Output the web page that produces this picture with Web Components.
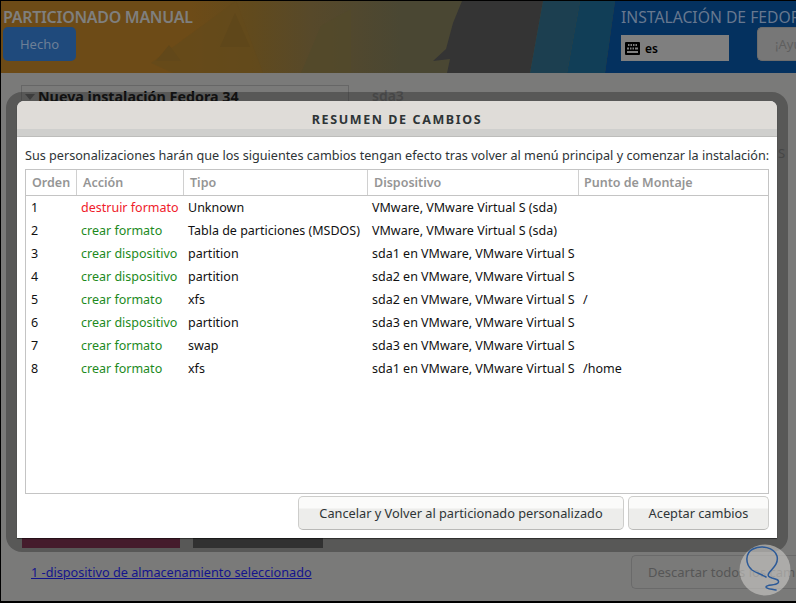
<!DOCTYPE html>
<html lang="es">
<head>
<meta charset="utf-8">
<title>Resumen de cambios</title>
<style>
html, body { margin: 0; padding: 0; height: 100%; background: #000; }
body { width: 796px; height: 603px; overflow: hidden; font-family: "Noto Sans", "Open Sans", sans-serif; }
</style>
</head>
<body>
<installer-screen>
    <summary-dialog></summary-dialog>
</installer-screen>

<template id="screen-template">
<style>
:host {
    display: block;
    position: relative;
    box-sizing: border-box;
    width: 796px;
    height: 603px;
    padding: 1px 0 2px 1px;
    background: #000;
    overflow: hidden;
}
.app { display: flex; flex-direction: column; height: 100%; background: #7a7a79; }
.head {
    position: relative;
    flex: 0 0 72px;
    display: flex;
    justify-content: space-between;
    overflow: hidden;
    background: linear-gradient(90deg, #6d4b17 0, #6d4b17 190px, #614a1d 250px, #57492a 310px, #4a4733 400px);
}
.art { position: absolute; inset: 0; width: 795px; height: 72px; }
.left, .right { position: relative; display: flex; flex-direction: column; }
.left { padding-left: 2px; }
.head h1 {
    margin: 0;
    padding-top: 7px;
    font-size: 16px;
    line-height: 19px;
    font-weight: 600;
    letter-spacing: -0.3px;
    color: #7f7f7e;
    white-space: nowrap;
}
.done {
    box-sizing: border-box;
    width: 73px;
    height: 34px;
    border-radius: 5px;
    background: #1f4a7c;
    color: #6d7f96;
    font-size: 13px;
    display: flex;
    align-items: center;
    justify-content: center;
}
.right { width: 175px; }
.right h2 {
    margin: 0;
    padding-top: 7px;
    font-size: 15.7px;
    line-height: 19px;
    font-weight: 400;
    color: #67788f;
    white-space: nowrap;
}
.tools { display: flex; gap: 28px; margin-top: 8px; }
.kbd {
    box-sizing: border-box;
    flex: 0 0 108px;
    height: 26px;
    background: #7f7f7f;
    display: flex;
    align-items: center;
    gap: 5px;
    padding-left: 4px;
    font-size: 12px;
    font-weight: 600;
    color: #000;
}
.help {
    flex: 0 0 auto;
    width: 60px;
    height: 34px;
    margin-top: -8px;
    box-sizing: border-box;
    border: 1px solid #6d6d6d;
    border-radius: 5px 0 0 5px;
    border-right: 0;
    background: #777;
    color: #5f5f5f;
    font-size: 13px;
    line-height: 32px;
    padding-left: 17px;
    white-space: nowrap;
    overflow: hidden;
}
.body { flex: 1; position: relative; display: flex; flex-direction: column; }
.main { flex: 1; display: flex; padding: 12px 0 0 20px; gap: 23px; }
.tree {
    box-sizing: border-box;
    width: 328px;
    border: 1px solid #666;
    border-bottom: 0;
    height: 60px;
    display: flex;
    align-items: flex-start;
    gap: 3px;
    padding: 1px 0 0 3px;
    font-size: 14.3px;
    line-height: 19px;
    font-weight: 700;
    color: #000;
    white-space: nowrap;
}
.arrow { width: 0; height: 0; margin-top: 7px; border: 5px solid transparent; border-top: 6px solid #4b4b4b; border-bottom: 0; }
.sda { font-size: 14px; line-height: 21px; font-weight: 600; color: #5c5c5c; }
.foot { flex: 0 0 46px; display: flex; align-items: flex-start; justify-content: space-between; padding: 0 0 0 30px; }
.foot a { font-size: 12.7px; line-height: 34px; color: #14148c; text-decoration: underline; white-space: nowrap; }
.discard {
    box-sizing: border-box;
    width: 165px;
    height: 34px;
    border: 1px solid #6a6a6a;
    border-right: 0;
    border-radius: 5px 0 0 5px;
    font-size: 13px;
    line-height: 32px;
    padding-left: 16px;
    color: #565656;
    white-space: nowrap;
    overflow: hidden;
}
.blocks { position: absolute; left: 21px; top: 455px; display: flex; gap: 13px; }
.blocks i { display: block; height: 20px; }
.blocks i:first-child { width: 158px; background: #5a1430; }
.blocks i:last-child { width: 130px; background: #383838; }
.stray { position: absolute; left: 777px; top: 71px; font-size: 13px; color: #5c5c5c; }
.frame {
    position: absolute;
    left: 6px;
    top: 92px;
    width: 782px;
    height: 460px;
    border-radius: 16px;
    background: rgba(40, 40, 40, .42);
}
.slotted { position: absolute; left: 17px; top: 101px; }
.mark { position: absolute; left: 739px; top: 544px; width: 52px; height: 52px; }
</style>
<div class="app">
    <div class="head">
        <svg class="art" viewBox="0 0 795 72" aria-hidden="true">
            <polygon points="150,62 235,0 262,72 172,72" fill="#644a1b" opacity=".7"/>
            <polygon points="234,12 249,46 219,46" fill="#5f471a"/>
            <polygon points="168,44 180,60 155,60" fill="#62481a"/>
            <polygon points="300,72 320,25 350,8 350,72" fill="#534a2a" opacity=".8"/>
            <polygon points="461,0 542,0 529,72 446,72 449,58 432,60 445,48 452,22" fill="#343434"/>
            <polygon points="542,0 579,0 566,72 529,72" fill="#1c3f50"/>
            <polygon points="579,0 614,0 604,72 566,72" fill="#113e57"/>
            <polygon points="614,0 795,0 795,72 604,72" fill="#04315f"/>
        </svg>
        <div class="left">
            <h1>PARTICIONADO MANUAL</h1>
            <div class="done">Hecho</div>
        </div>
        <div class="right">
            <h2>INSTALACIÓN DE FEDORA</h2>
            <div class="tools">
                <div class="kbd">
                    <svg width="15" height="13" viewBox="0 0 15 13" aria-hidden="true">
                        <path fill="#000" fill-rule="evenodd" d="M1 0h13a1 1 0 0 1 1 1v11a1 1 0 0 1-1 1H1a1 1 0 0 1-1-1V1a1 1 0 0 1 1-1zM3 2v2h1.500V2zm2.500 0v2H7V2zM8 2v2h1.500V2zm2.500 0v2H12V2zM2 5.500v2h2v-2zm3 0v2h1.500v-2zm2.500 0v2H9v-2zm2.500 0v2h3v-2zM2 9v2h11V9z"/>
                    </svg>
                    <span>es</span>
                </div>
                <div class="help">¡Ayuda!</div>
            </div>
        </div>
    </div>
    <div class="body">
        <div class="main">
            <div class="tree"><span class="arrow"></span><span>Nueva instalación Fedora 34</span></div>
            <div class="sda">sda3</div>
        </div>
        <div class="foot">
            <a>1 -dispositivo de almacenamiento seleccionado</a>
            <div class="discard">Descartar todos los cambios</div>
        </div>
        <div class="blocks"><i></i><i></i></div>
        <div class="stray">S</div>
    </div>
</div>
<div class="frame"></div>
<div class="slotted"><slot></slot></div>
<svg class="mark" viewBox="0 0 52 52" aria-hidden="true">
    <circle cx="26" cy="26" r="25.5" fill="#cbc9c6" fill-opacity=".62"/>
    <path d="M27 33 C22 30 17 29 13 26 C6 20 6 9 14 5 C22 1 35 3 38 12 C40 20 33 25 30 29 C28 32 30 33 33 34 C37 35 41 36 39 39 C36 42 28 40 27 43 C27 45 33 45 37 46" fill="none" stroke="#2c5a98" stroke-width="1.5" stroke-linecap="round"/>
</svg>
</template>

<template id="dialog-template">
<style>
:host {
    display: flex;
    flex-direction: column;
    box-sizing: border-box;
    width: 760px;
    height: 437px;
    background: #fff;
    border-radius: 7px 7px 0 0;
    box-shadow: 0 1px 1px rgba(0,0,0,.5);
    overflow: hidden;
    color: #2e3436;
}
header {
    flex: 0 0 28px;
    box-sizing: border-box;
    padding-top: 8px;
    display: flex;
    align-items: center;
    justify-content: center;
    background: #dfdcd8;
    font-size: 12.5px;
    font-weight: 700;
    letter-spacing: 1.6px;
    color: #2e3436;
}
.band { flex: 0 0 8px; box-sizing: border-box; background: #cfcfcd; border-bottom: 1px solid #bdbdbb; }
.msg {
    margin: 0;
    padding: 10px 0 0 8px;
    height: 32px;
    box-sizing: border-box;
    font-size: 12.64px;
    line-height: 16px;
    white-space: nowrap;
}
.list {
    flex: 0 0 325px;
    margin: 0 8px;
    box-sizing: border-box;
    border: 1px solid #c4c4c4;
    display: flex;
    flex-direction: column;
}
.actions { display: flex; justify-content: flex-end; gap: 4px; padding: 2px 8px 0; }
</style>
<header>RESUMEN DE CAMBIOS</header>
<div class="band"></div>
<p class="msg">Sus personalizaciones harán que los siguientes cambios tengan efecto tras volver al menú principal y comenzar la instalación:</p>
<div class="list">
    <change-row head>
        <span>Orden</span><span>Acción</span><span>Tipo</span><span>Dispositivo</span><span>Punto de Montaje</span>
    </change-row>
    <div id="rows"></div>
</div>
<div class="actions">
    <push-button style="width:326px">Cancelar y Volver al particionado personalizado</push-button>
    <push-button style="width:141px">Aceptar cambios</push-button>
</div>
</template>

<template id="row-template">
<style>
:host {
    display: grid;
    grid-template-columns: 50px 107px 184px 211px 1fr;
    height: 23px;
    font-size: 12.5px;
    line-height: 23px;
    color: #111;
    white-space: nowrap;
}
:host([head]) {
    height: 26px;
    line-height: 25px;
    font-weight: 600;
    color: #959595;
    border-bottom: 1px solid #c4c4c4;
    box-sizing: border-box;
}
::slotted(span) { padding-left: 5px; box-sizing: border-box; min-width: 0; }
:host([head]) ::slotted(span) { padding-left: 6px; }
:host([head]) ::slotted(span:not(:first-child)) { border-left: 1px solid #d0d0d0; }
:host([head]) ::slotted(span:last-child) { padding-left: 5px; }
::slotted(.destroy) { color: #f0202a; }
::slotted(.create) { color: #1d8a1d; }
</style>
<slot></slot>
</template>

<template id="button-template">
<style>
:host {
    display: block;
    box-sizing: border-box;
    height: 34px;
    border: 1px solid #cdcdcb;
    border-bottom-color: #b9b9b7;
    border-radius: 5px;
    background: linear-gradient(180deg, #fbfbfa 0, #fbfbfa 11px, #ededeb 12px, #ededeb 100%);
    font-size: 12.75px;
    line-height: 32px;
    text-align: center;
    color: #2e3436;
    white-space: nowrap;
}
</style>
<slot></slot>
</template>

<script>
const changes = [
    ['1', 'destroy', 'destruir formato', 'Unknown', 'VMware, VMware Virtual S (sda)', ''],
    ['2', 'create', 'crear formato', 'Tabla de particiones (MSDOS)', 'VMware, VMware Virtual S (sda)', ''],
    ['3', 'create', 'crear dispositivo', 'partition', 'sda1 en VMware, VMware Virtual S', ''],
    ['4', 'create', 'crear dispositivo', 'partition', 'sda2 en VMware, VMware Virtual S', ''],
    ['5', 'create', 'crear formato', 'xfs', 'sda2 en VMware, VMware Virtual S', '/'],
    ['6', 'create', 'crear dispositivo', 'partition', 'sda3 en VMware, VMware Virtual S', ''],
    ['7', 'create', 'crear formato', 'swap', 'sda3 en VMware, VMware Virtual S', ''],
    ['8', 'create', 'crear formato', 'xfs', 'sda1 en VMware, VMware Virtual S', '/home'],
];

function stamp(el, id) {
    el.attachShadow({ mode: 'open' });
    el.shadowRoot.appendChild(document.getElementById(id).content.cloneNode(true));
}

class InstallerScreen extends HTMLElement {
    constructor() {
        super();
        stamp(this, 'screen-template');
    }
}

class ChangeRow extends HTMLElement {
    constructor() {
        super();
        stamp(this, 'row-template');
    }
}

class PushButton extends HTMLElement {
    constructor() {
        super();
        stamp(this, 'button-template');
    }
}

class SummaryDialog extends HTMLElement {
    constructor() {
        super();
        stamp(this, 'dialog-template');
    }

    connectedCallback() {
        let rows = this.shadowRoot.getElementById('rows');
        changes.forEach(([order, kind, action, type, device, mount]) => {
            let row = document.createElement('change-row');
            [order, action, type, device, mount].forEach((text, i) => {
                let cell = document.createElement('span');
                cell.textContent = text;
                if (i === 1) {
                    cell.className = kind;
                }
                row.appendChild(cell);
            });
            rows.appendChild(row);
        });
    }
}

customElements.define('change-row', ChangeRow);
customElements.define('push-button', PushButton);
customElements.define('summary-dialog', SummaryDialog);
customElements.define('installer-screen', InstallerScreen);
</script>
</body>
</html>
